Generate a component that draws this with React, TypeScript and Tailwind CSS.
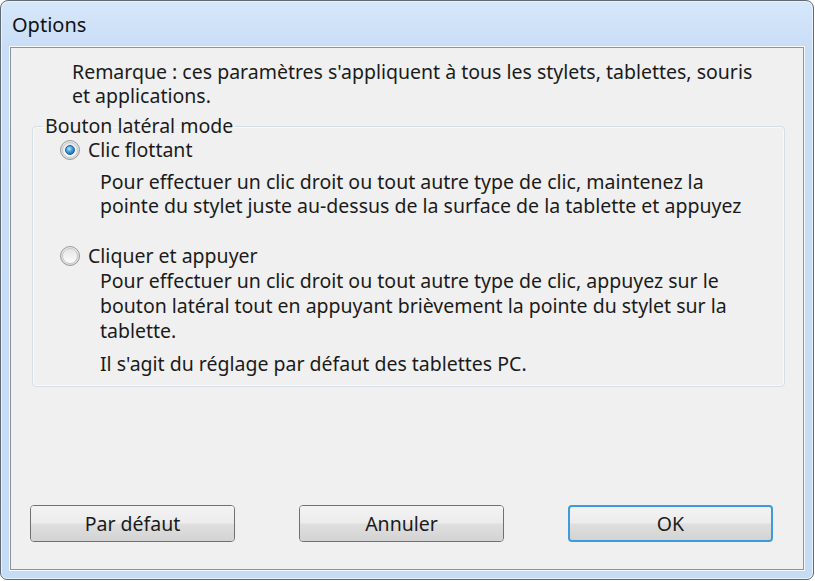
import React from "react";

function Radio({ checked }: { checked: boolean }) {
  return (
    <div className="w-[20px] h-[20px] rounded-full border border-[#9a9a9a] bg-[radial-gradient(circle_at_50%_40%,#ffffff,#e2e2e2_60%,#cfcfcf)] flex items-center justify-center shrink-0">
      <div className="w-[16px] h-[16px] rounded-full border border-[#c8c8c8] bg-[linear-gradient(#e6e6e6,#fbfbfb)] flex items-center justify-center">
        {checked && (
          <div className="w-[10px] h-[10px] rounded-full border border-[#1b5f95] bg-[radial-gradient(circle_at_40%_35%,#b9e3ff,#3b9be0_45%,#0f5a9c)]" />
        )}
      </div>
    </div>
  );
}

function Btn({ label, def }: { label: string; def?: boolean }) {
  return (
    <div
      className={
        "w-[205px] h-[37px] rounded-[4px] flex items-center justify-center " +
        (def
          ? "border-2 border-[#3d9bd9] shadow-[inset_0_0_0_1px_#9fd3f3]"
          : "border border-[#707070] shadow-[inset_0_0_0_1px_#fbfbfb]")
      }
    >
      <div className="w-full h-full rounded-[3px] bg-[linear-gradient(#f3f3f3_0%,#ececec_48%,#dfdfdf_52%,#d3d3d3_100%)] flex items-center justify-center text-[#1b1b1b]">
        {label}
      </div>
    </div>
  );
}

export default function App() {
  return (
    <div
      className="w-[815px] h-[581px] bg-white text-[19.5px] leading-[24px] text-[#1b1b1b]"
      style={{ fontFamily: '"Noto Sans", "Open Sans", sans-serif' }}
    >
      <div className="w-[814px] h-[580px] rounded-t-[8px] rounded-b-[7px] border border-[#5f6a75] bg-[linear-gradient(#d6e7fa,#c9def6_8%,#c6dcf5)] flex flex-col shadow-[inset_0_0_0_1px_#e8f2fd]">
        <div className="h-[46px] shrink-0 pl-[11px] pt-[12px] text-[20px] leading-[24px] text-[#111]">
          Options
        </div>
        <div className="flex-1 mx-[9px] mb-[9px] border border-[#8d949b] bg-[#f0f0f0] shadow-[0_0_0_1px_#f4f9ff] flex flex-col pt-[12px]">
          <div className="pl-[61px] pr-[20px] whitespace-nowrap">
            Remarque : ces paramètres s'appliquent à tous les stylets, tablettes, souris
            <br />
            et applications.
          </div>
          <fieldset className="ml-[21px] mr-[18px] border border-[#d5dfe5] rounded-[4px] pb-[10px] mt-[6px] shadow-[inset_0_0_0_1px_#f7f9fa] whitespace-nowrap">
            <legend className="ml-[10px] px-[2px]">Bouton latéral mode</legend>
            <div className="pl-[27px]">
              <div className="flex items-center h-[24px]">
                <Radio checked />
                <span className="ml-[8px]">Clic flottant</span>
              </div>
              <div className="pl-[40px] mt-[8px]">
                Pour effectuer un clic droit ou tout autre type de clic, maintenez la
                <br />
                pointe du stylet juste au-dessus de la surface de la tablette et appuyez
              </div>
              <div className="flex items-center h-[24px] mt-[26px]">
                <Radio checked={false} />
                <span className="ml-[8px]">Cliquer et appuyer</span>
              </div>
              <div className="pl-[40px] leading-[25px]">
                Pour effectuer un clic droit ou tout autre type de clic, appuyez sur le
                <br />
                bouton latéral tout en appuyant brièvement la pointe du stylet sur la
                <br />
                tablette.
              </div>
              <div className="pl-[40px] mt-[9px]">
                Il s'agit du réglage par défaut des tablettes PC.
              </div>
            </div>
          </fieldset>
          <div className="flex-1" />
          <div className="flex pl-[19px] gap-[64px] pb-[27px]">
            <Btn label="Par défaut" />
            <Btn label="Annuler" />
            <Btn label="OK" def />
          </div>
        </div>
      </div>
    </div>
  );
}
